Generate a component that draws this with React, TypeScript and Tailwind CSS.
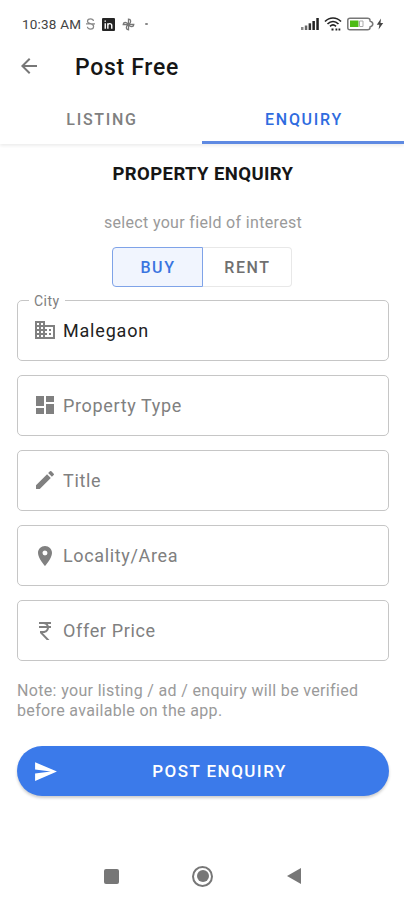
import React from 'react';
import {
  MdArrowBack,
  MdBusiness,
  MdCurrencyRupee,
  MdDashboard,
  MdEdit,
  MdLocationOn,
  MdSend,
} from 'react-icons/md';
import type { IconType } from 'react-icons';

const fields: { label: string; icon: IconType }[] = [
  { label: 'Property Type', icon: MdDashboard },
  { label: 'Title', icon: MdEdit },
  { label: 'Locality/Area', icon: MdLocationOn },
  { label: 'Offer Price', icon: MdCurrencyRupee },
];

function StatusBar() {
  return (
    <div className="flex h-12 items-center pl-[22px] pr-[20px] text-[#444]">
      <span className="w-[59px] whitespace-nowrap text-[13.5px] tracking-[0.2px]">10:38 AM</span>
      {/* Notification icons */}
      <svg className="ml-[4px]" width="11" height="14" viewBox="0 0 11 14" fill="none" stroke="#888" strokeWidth="1.2">
        <path d="M8.5 4C8.3 2.4 7 1.8 5.5 1.8S2.5 2.5 2.5 4.2C2.5 6 4 6.3 5.5 6.7S8.6 7.6 8.6 9.6 7 12.2 5.5 12.2 2.4 11.4 2.4 9.8M1 6.8h9" />
      </svg>
      <svg className="ml-[6px]" width="13" height="13" viewBox="0 0 12 12">
        <rect width="12" height="12" rx="1" fill="#252525" />
        <path d="M3 4.8V10M3 2.2v1.3M5.4 10V4.8M5.4 7c0-2.4 3.6-2.4 3.6 0v3" fill="none" stroke="#fff" strokeWidth="1.3" />
      </svg>
      <svg className="ml-[7px]" width="13" height="13" viewBox="0 0 13 13" fill="none" stroke="#777" strokeWidth="1.3">
        <path d="M6.5 6.5V1.2c2.4 0 3.4 3.2 0 5.3ZM6.5 6.5h5.3c0 2.4-3.2 3.4-5.3 0ZM6.5 6.5v5.3c-2.4 0-3.4-3.2 0-5.3ZM6.5 6.5H1.2c0-2.4 3.2-3.4 5.3 0Z" />
      </svg>
      <span className="ml-[10px] h-[2px] w-[3px] rounded-full bg-[#888]" />
      <div className="ml-auto flex items-center">
        <svg width="18" height="12" viewBox="0 0 18 12">
          <path d="M0 9h2.5v3H0z" fill="#888" />
          <path d="M3.8 7.5h2.5V12H3.8z" fill="#666" />
          <path d="M7.6 5.3h2.5V12H7.6z" fill="#333" />
          <path d="M11.4 3h2.5v9h-2.5zM15.3 0h2.5v12h-2.5z" fill="#222" />
        </svg>
        <svg className="ml-[5px]" width="18" height="14" viewBox="0 0 18 14" fill="none" stroke="#222" strokeWidth="1.7">
          <path d="M1 4.5C5.500-.2 12.500-.2 17 4.500M3.500 7c3.300-3.200 7.700-3.200 11 0M6 9.300c1.800-1.600 4.200-1.600 6 0" />
          <path d="M7.5 12.5h2M11.5 12.5h1.8M14.5 12.5h1.8" strokeWidth="1.8" />
        </svg>
        <svg className="ml-[5px]" width="27" height="14" viewBox="0 0 27 14">
          <path d="M3 1.2h17.5q2.5 0 2.5 2v.8q2.8 1 2.800 3t-2.800 3v.8q0 2-2.500 2H3q-2.200 0-2.200-2V3.200q0-2 2.200-2Z" fill="#fff" stroke="#777" strokeWidth="1.5" />
          <rect x="3" y="3.5" width="8.5" height="6.5" fill="#4dbb16" />
          <path d="M12.5 4h3.5v5.5h-3.5z" fill="none" stroke="#aaa" />
        </svg>
        <svg className="ml-[2px]" width="8" height="12" viewBox="0 0 8 12">
          <path d="M5 .5.800 6.800h2.600L2.600 11.500 7.200 5H4.500Z" fill="#444" />
        </svg>
      </div>
    </div>
  );
}

function Header() {
  return (
    <header className="flex h-[37px] items-center pl-[17px]">
      <MdArrowBack className="-mt-[2px] size-[24px] text-[#777]" />
      <h1 className="ml-[34px] pt-[1px] text-[23px] font-medium leading-none tracking-[0.7px] text-[#161616]">
        Post Free
      </h1>
    </header>
  );
}

function Tabs() {
  return (
    <div className="grid h-[59px] grid-cols-2 text-center text-[16px] font-medium tracking-[1.7px] shadow-[0_2px_3px_rgba(0,0,0,0.07)]">
      <div className="pt-[23px] pl-[2px] text-[#808080]">LISTING</div>
      <div className="h-[59px] border-b-3 border-[#5f8ae2] pt-[23px] pl-[2px] text-[#2f6cdf]">ENQUIRY</div>
    </div>
  );
}

function Field({ label, icon: Icon }: { label: string; icon: IconType }) {
  return (
    <div className="flex h-[61px] items-center rounded-[5px] border-[1.5px] border-[#c6c6c6] pl-[15px]">
      <Icon className="size-[24px] text-[#808080]" />
      <span className="ml-[6px] text-[18px] tracking-[0.65px] text-[#808080]">{label}</span>
    </div>
  );
}

function App() {
  return (
    <div className="flex h-[900px] w-[404px] flex-col bg-white font-['Roboto',sans-serif]">
      <StatusBar />
      <Header />
      <Tabs />

      <main className="flex flex-col pr-[15px] pl-[17px]">
        <h2 className="mt-[19px] text-center text-[18.5px] font-bold leading-[22px] tracking-[0.4px] text-[#161616]">
          PROPERTY ENQUIRY
        </h2>
        <p className="mt-[27px] text-center text-[16px] leading-[22px] tracking-[0.33px] text-[#9a9a9a]">
          select your field of interest
        </p>

        <div className="mt-[13px] ml-[95px] flex h-[40px] text-[16px] font-medium leading-[40px] tracking-[1.6px]">
          <div className="w-[91px] rounded-l-[4px] border border-[#7fa3e8] bg-[#f1f5fe] pl-[1px] text-center text-[#3a74e0]">
            BUY
          </div>
          <div className="w-[89px] rounded-r-[4px] border border-l-0 border-[#e8e8e8] pl-[1px] text-center text-[#707070]">
            RENT
          </div>
        </div>

        <div className="mt-[12.6px] flex flex-col gap-[14.2px]">
          <div className="relative flex h-[61px] items-center rounded-[5px] border-[1.5px] border-[#c6c6c6] pl-[15px]">
            <span className="absolute -top-[10px] left-[11px] bg-white px-[5px] text-[14px] leading-[20px] tracking-[0.5px] text-[#808080]">
              City
            </span>
            <MdBusiness className="size-[24px] text-[#808080]" />
            <span className="ml-[6px] text-[18px] tracking-[0.8px] text-[#222]">Malegaon</span>
          </div>
          {fields.map((field) => (
            <Field key={field.label} {...field} />
          ))}
        </div>

        <p className="mt-[19.8px] text-[16px] leading-[20px] tracking-[0.34px] text-[#9a9a9a]">
          Note: your listing / ad / enquiry will be verified before available on the app.
        </p>

        <button className="mt-[25px] flex h-[50px] items-center rounded-full bg-[#3b7aea] pl-[16px] text-white shadow-[0_2px_3px_rgba(0,0,0,0.2)]">
          <MdSend className="size-[25px]" />
          <span className="flex-1 pt-px pr-[8px] text-center text-[17px] font-medium tracking-[1.45px]">POST ENQUIRY</span>
        </button>
      </main>

      {/* Android navigation */}
      <nav className="mt-auto flex h-[48px] items-center pl-[104px] text-[#777]">
        <div className="size-[15px] rounded-[2px] bg-[#777]" />
        <div className="ml-[73px] flex size-[21px] items-center justify-center rounded-full border-2 border-[#777]">
          <div className="size-[12px] rounded-full bg-[#777]" />
        </div>
        <svg className="ml-[73px]" width="16" height="18" viewBox="0 0 16 18">
          <path d="M15 1v16L1 9Z" fill="#777" />
        </svg>
      </nav>
    </div>
  );
}

export default App;
